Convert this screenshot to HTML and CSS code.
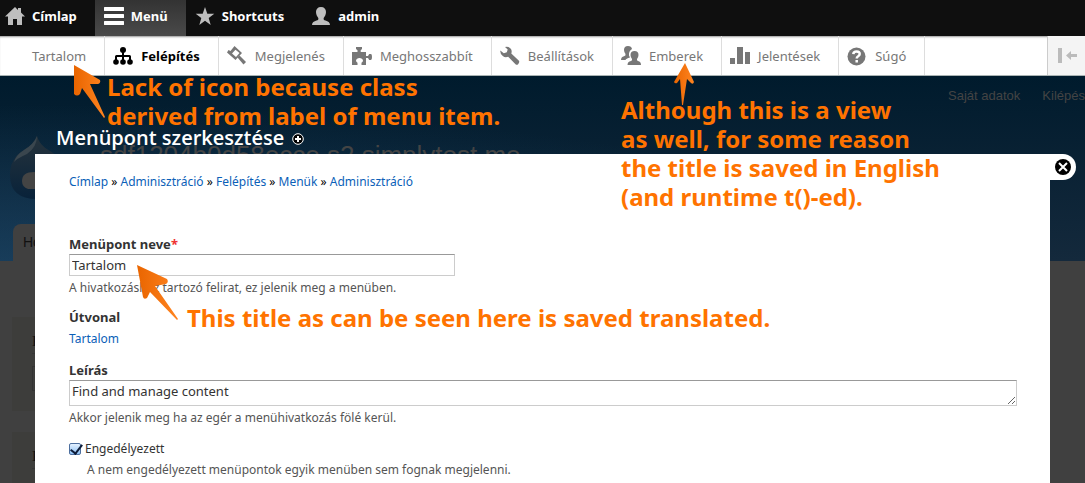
FILE: index.html
```
<!DOCTYPE html>
<html lang="hu">
<head>
    <meta charset="utf-8">
    <title>Menüpont szerkesztése</title>
    <link rel="stylesheet" href="styles.css">
</head>
<body>

<nav class="bar">
    <a class="tab home" href="#">
        <svg class="icon" viewBox="0 0 20 20"><path d="M10 1L0 10.500h3V19h5v-6h4v6h5v-8.500h3L16 6.500V2h-3v2z"/></svg>
        Címlap
    </a>
    <a class="tab active" href="#">
        <svg class="icon" viewBox="0 0 20 20"><path d="M1 1h18a1 1 0 0 1 0 4H1a1 1 0 0 1 0-4zM1 8h18a1 1 0 0 1 0 4H1a1 1 0 0 1 0-4zM1 15h18a1 1 0 0 1 0 4H1a1 1 0 0 1 0-4z"/></svg>
        Menü
    </a>
    <a class="tab" href="#">
        <svg class="icon" viewBox="0 0 20 20"><path d="M10 1l2.300 6.700h7l-5.600 4.200 2 7.100-5.700-4.200L4.300 19l2-7.100L.7 7.700h7z"/></svg>
        Shortcuts
    </a>
    <a class="tab" href="#">
        <svg class="icon" viewBox="0 0 20 20"><path d="M10 1c3.200 0 5 2 5 5 0 2.700-1.200 4.500-2.300 6-.4 1.500.3 2 1.800 2.600C17 15.500 19 16.500 19 19H1c0-2.500 2-3.500 4.500-4.400 1.500-.6 2.200-1.100 1.800-2.600C6.200 10.500 5 8.700 5 6c0-3 1.800-5 5-5z"/></svg>
        admin
    </a>
</nav>

<nav class="tray">
    <a class="item" href="#"><span class="icon"></span>Tartalom</a>
    <a class="item active" href="#">
        <svg class="icon" viewBox="0 0 20 20"><circle cx="10" cy="4" r="3"/><path d="M9 5h2v4h5.500q1.500 0 1.500 1.500V15h-2v-4h-5v4H9v-4H4v4H2v-4.500Q2 9 3.500 9H9z"/><circle cx="3" cy="16" r="2.800"/><circle cx="10" cy="16" r="2.800"/><circle cx="17" cy="16" r="2.800"/></svg>
        Felépítés
    </a>
    <a class="item" href="#">
        <svg class="icon" viewBox="0 0 20 20"><path fill-rule="evenodd" d="M7.500 0L15 7l-6.500 7L0 6.500 1.500 4 3.500 5zM8.500 3.800L5 7.500l4 3.500 3.500-4z"/><path d="M10.500 11.500l2-2 6.500 6.500-2.500 2.500z"/></svg>
        Megjelenés
    </a>
    <a class="item" href="#">
        <svg class="icon" viewBox="0 0 20 20"><path d="M0 6h5.500V4.200L4 3V1h6v2L8.700 4.200V6H14v4h2l1.200-2H19q1 0 1 3t-1 3h-1.800L16 12h-2v7H9.500v-2.200q1.500-.7 1.500-2.300Q10.500 12 7.500 12T4 14.500q0 1.600 1.500 2.300V19H0z"/></svg>
        Meghosszabbít
    </a>
    <a class="item" href="#">
        <svg class="icon" viewBox="0 0 20 20"><path d="M5 1q4-.8 6 2 1.200 2 .3 4.500l7.400 7q1 1 .2 2.500l-1 1.500q-1.200.8-2.400-.2l-7.300-7.500Q5 12 2.800 10 0 8 .3 4.500l3.500 2.800 3-1 .9-2.800z"/></svg>
        Beállítások
    </a>
    <a class="item" href="#">
        <svg class="icon" viewBox="0 0 20 20"><path d="M7 0q3.500 0 4 3Q7.500 5 8 9.500l1 2q-4 1-4.500 2.500H0q0-3 3-3.800 2-.5 1.500-2.200Q3 6 3 4q0-4 4-4z"/><path d="M13.500 5q4 0 4 4 0 2-1.500 4-.5 1.500 1 2 3 .5 3 4H6.500q0-3.500 3.500-4 1.500-.5 1-2Q9.500 11 9.500 9q0-4 4-4z"/></svg>
        Emberek
    </a>
    <a class="item" href="#">
        <svg class="icon" viewBox="0 0 20 20"><path d="M0 12h5v6H0zM7 1h6v17H7zM15 6h5v12h-5z"/></svg>
        Jelentések
    </a>
    <a class="item" href="#">
        <svg class="icon" viewBox="0 0 20 20"><circle cx="9.500" cy="10.500" r="9"/><path class="mark" d="M6.300 8.200Q6.500 5.600 9.700 5.600t3 2.500q0 1.200-1.500 2.100T9.700 12.600M9.700 14v2.500"/></svg>
        Súgó
    </a>
    <button class="collapse" type="button" aria-label="Összecsukás">
        <svg class="icon" viewBox="0 0 20 20"><path d="M0 2h4v15H0zM8 9.500L13 5v3h6v3h-6v3z"/></svg>
    </button>
</nav>

<div class="stage">

    <!-- the page under the overlay -->
    <div class="site">
        <header class="site-head">
            <svg class="logo" viewBox="0 0 56 64">
                <defs>
                    <linearGradient id="drop" x1="0" y1="0" x2="0" y2="1">
                        <stop offset="0" stop-color="#26333c"/>
                        <stop offset="1" stop-color="#08223a"/>
                    </linearGradient>
                </defs>
                <path fill="url(#drop)" d="M27 0q2 9 13 15 14 8 14 24 0 24-27 24T0 39Q0 22 14 14 24 8 27 0z"/>
                <path fill="#3a464e" d="M27 0q0 11-10 18Q6 23 4 26 6 19 14 14 24 8 27 0z"/>
                <path fill="#444" d="M24 36q8 0 14 6v11H18q-6-2-6-8 0-9 12-9z"/>
            </svg>
            <span class="site-name">sdf1204b0d58ecce.s2.simplytest.me</span>
            <div class="user-menu"><a href="#">Saját adatok</a><a href="#">Kilépés</a></div>
            <a class="site-tab" href="#">Home</a>
        </header>
        <div class="site-body">
            <div class="block"><h2>Keresés</h2><div class="field"></div></div>
            <div class="block"><h2>Eszközök</h2></div>
        </div>
    </div>

    <div class="overlay">
        <h1>Menüpont szerkesztése
            <svg class="plus" viewBox="0 0 12 12"><circle cx="6" cy="6" r="5.300"/><path d="M6 3v6M3 6h6"/></svg>
        </h1>
        <main class="panel">
            <button class="close" type="button" aria-label="Bezárás">
                <svg viewBox="0 0 16 16"><circle cx="8" cy="8" r="8"/><path d="M4 4l8 8M12 4l-8 8"/></svg>
            </button>
            <div class="crumbs">
                <a href="#">Címlap</a> » <a href="#">Adminisztráció</a> » <a href="#">Felépítés</a> » <a href="#">Menük</a> » <a href="#">Adminisztráció</a>
            </div>
            <form>
                <div class="row">
                    <label class="tit" for="link_title">Menüpont neve<span class="required">*</span></label>
                    <input class="text" type="text" id="link_title" value="Tartalom">
                    <div class="desc">A hivatkozáshoz tartozó felirat, ez jelenik meg a menüben.</div>
                </div>
                <div class="row">
                    <div class="tit">Útvonal</div>
                    <a class="path" href="#">Tartalom</a>
                </div>
                <div class="row">
                    <label class="tit" for="description">Leírás</label>
                    <textarea class="text" id="description" rows="1">Find and manage content</textarea>
                    <div class="desc">Akkor jelenik meg ha az egér a menühivatkozás fölé kerül.</div>
                </div>
                <div class="row">
                    <div class="check"><input type="checkbox" id="enabled" checked><label for="enabled">Engedélyezett</label></div>
                    <div class="desc indent">A nem engedélyezett menüpontok egyik menüben sem fognak megjelenni.</div>
                </div>
            </form>
        </main>
    </div>
</div>

<!-- notes -->
<svg class="arrow arrow-icon" viewBox="0 0 32 54">
    <defs>
        <linearGradient id="orange">
            <stop offset="0" stop-color="#e96500"/>
            <stop offset="1" stop-color="#ff8420"/>
        </linearGradient>
    </defs>
    <path d="M0 0L26 15q1 3-2 4l-8 0 15 33-1 1L8 23 6 29Q3 32 0 29z"/>
</svg>
<svg class="arrow arrow-view" viewBox="0 0 20 42"><path d="M11 0l9 19q-1 3-3 1l-4-4-4 26H8L6 16l-3 4q-2 1-3-1z"/></svg>
<svg class="arrow arrow-title" viewBox="0 0 42 56"><path d="M0 0l30 14q2 3-1 5l-11 2 23 33-1 1-27-28-3 6q-3 2-4-1z"/></svg>
<p class="note note-icon">Lack of icon because class<br>derived from label of menu item.</p>
<p class="note note-view">Although this is a view<br>as well, for some reason<br>the title is saved in English<br>(and runtime t()-ed).</p>
<p class="note note-title">This title as can be seen here is saved translated.</p>

</body>
</html>
```

FILE: styles.css
```
*{ box-sizing: border-box;}
body {
    margin: 0;
    height: 100vh;
    display: flex;
    flex-direction: column;
    overflow: hidden;
    position: relative;
    background: #404040;
    color: #333;
    font: 12px/20px "Noto Sans", "Open Sans", sans-serif;
}
a{ color: #0b5fb8;text-decoration: none;}
.icon{ width: 20px;height: 20px;flex: none;fill: currentColor;}

.bar, .tray{ display: flex;flex: none;font-size: 13px;}
.bar{ height: 36px;background: #0f0f0f;}
.tab {
    display: flex;
    align-items: center;
    gap: 7px;
    padding: 0 18px 4px 9px;
    color: #fff;
    font-weight: bold;
}
.tab.home{ padding-left: 5px;}
.tab .icon{ color: #bebebe;}
.tab.active{ background: linear-gradient(#333, #4a4a4a);}
.tab.active .icon{ color: #fff;}

.tray {
    height: 40px;
    background: #fff;
    border-bottom: 1px solid #a9b3b3;
    box-shadow: inset 0 2px 2px -1px #999;
}
.item {
    display: flex;
    align-items: center;
    gap: 8px;
    padding: 0 18px 0 8px;
    border-right: 1px solid #ddd;
    color: #777;
}
.item:first-child{ padding-left: 4px;}
.item.active{ color: #000;font-weight: bold;}
.mark{ fill: none;stroke: #fff;stroke-width: 2.500px;}
.collapse {
    margin-left: auto;
    width: 38px;
    padding: 0 0 0 10px;
    border: 0;
    border-left: 1px solid #ccc;
    background: #f4f4f4;
    color: #bbb;
    display: flex;
    align-items: center;
}

.stage{ flex: 1;min-height: 0;display: grid;grid-template-columns: 100%;overflow: hidden;}
.site, .overlay{ grid-area: 1 / 1;}
.site{ font-family: "Liberation Sans", sans-serif;color: #444;}
.site a{ color: #444;}
.site-head {
    height: 185px;
    padding: 10px 0 0 10px;
    display: grid;
    grid-template: 50px 78px 47px / 90px 1fr auto;
    background: radial-gradient(ellipse at 0 100%, rgba(30, 90, 135, .4), transparent 60%), linear-gradient(#001b2d, #14293c);
}
.logo{ width: 56px;height: 64px;grid-area: 2 / 1;}
.site-name{ grid-area: 2 / 2;margin-top: 4px;font-size: 26px;line-height: 30px;}
.user-menu{ grid-area: 1 / 3;display: flex;gap: 22px;font-size: 13px;}
.site-tab {
    grid-area: 3 / 1;
    margin: 10px 0 0 3px;
    padding: 8px 10px;
    border-radius: 8px 8px 0 0;
    background: #404040;
    font-size: 14px;
}
.site .site-tab{ color: #111;}
.site-body{ padding: 56px 12px;background: #404040;}
.block{ width: 200px;height: 94px;margin-bottom: 21px;padding: 12px 20px;background: #3d3d3b;}
.block h2{ margin: 0 0 12px;border-bottom: 1px solid #353535;font: 15px/24px "Liberation Serif", serif;color: #111;}
.field{ height: 25px;border: 1px solid #333;}

.overlay{ display: flex;flex-direction: column;padding: 0 35px;z-index: 1;}
h1 {
    margin: 0;
    height: 78px;
    padding: 48px 0 0 21px;
    color: #fff;
    font: 600 20px/28px "Open Sans", "Noto Sans", sans-serif;
}
.plus{ width: 12px;height: 12px;margin-left: 3px;fill: #000;stroke: #fff;}
.plus path{ stroke-width: 2px;}
.panel{ position: relative;flex: 1;padding: 18px 33px 0 34px;background: #fff;}
.close {
    position: absolute;
    top: 0;
    left: 100%;
    width: 26px;
    height: 26px;
    padding: 5px;
    border: 0;
    border-radius: 0 13px 13px 0;
    background: #fff;
}
.close svg{ display: block;width: 16px;height: 16px;}
.close path{ fill: none;stroke: #fff;stroke-width: 2px;}
.crumbs{ margin-bottom: 43px;color: #000;}
.row{ margin-bottom: 10px;}
.tit{ display: block;font-size: 13px;font-weight: bold;line-height: 19px;}
.required{ color: #e33;}
.text {
    display: block;
    width: 386px;
    height: 22px;
    margin: 0 0 2px;
    padding: 0 2px;
    border: 1px solid #ccc;
    border-top-color: #999;
    color: #333;
    font: 13px/20px "Noto Sans", "Open Sans", sans-serif;
}
textarea.text{ width: 100%;height: 26px;overflow: hidden;}
.desc{ color: #555;}
.path{ display: block;line-height: 24px;}
.check{ display: flex;align-items: center;gap: 4px;height: 22px;}
.check input {
    appearance: none;
    position: relative;
    width: 12px;
    height: 12px;
    margin: 0;
    border: 1px solid #4d6f9f;
    border-radius: 2px;
    background: linear-gradient(#e4f1ff, #8cc0f5);
}
.check input:checked::after {
    content: "";
    position: absolute;
    left: 3px;
    top: -2px;
    width: 5px;
    height: 10px;
    border: solid #0d1c38;
    border-width: 0 2px 2px 0;
    transform: rotate(38deg);
}
.indent{ padding-left: 18px;}

.note {
    position: absolute;
    z-index: 2;
    margin: 0;
    color: #ff7300;
    font: bold 24px/29px "Noto Sans", "Open Sans", sans-serif;
    white-space: nowrap;
}
.note-icon{ left: 107px;top: 72px;}
.note-view{ left: 621px;top: 95px;}
.note-title{ left: 187px;top: 303px;}
.arrow{ position: absolute;z-index: 2;fill: url(#orange);}
.arrow-icon{ left: 74px;top: 65px;width: 32px;height: 54px;}
.arrow-view{ left: 674px;top: 63px;width: 20px;height: 42px;}
.arrow-title{ left: 137px;top: 265px;width: 42px;height: 56px;}
```
